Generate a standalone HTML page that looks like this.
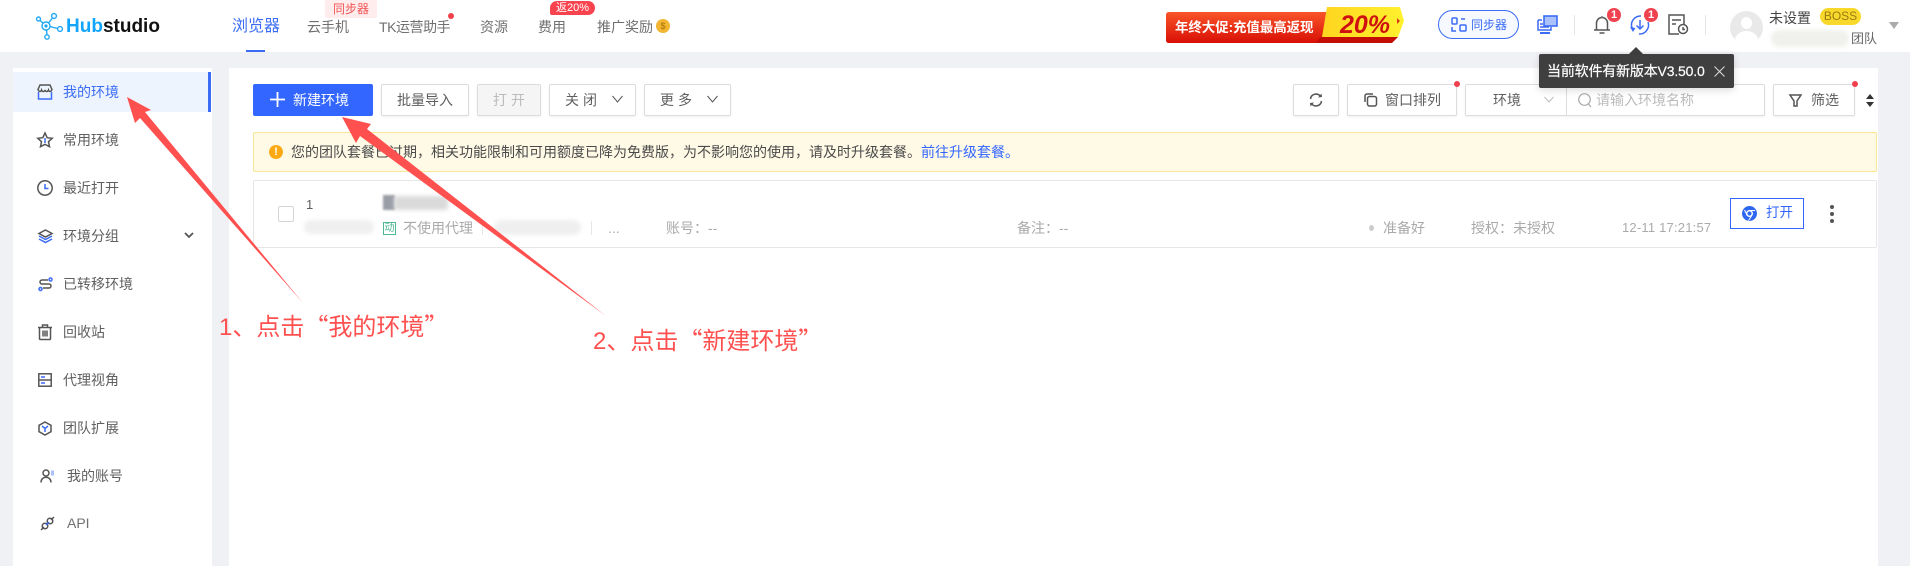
<!DOCTYPE html>
<html lang="zh"><head><meta charset="utf-8"><title>Hubstudio</title>
<style>
html,body{margin:0;padding:0}
body{width:1910px;height:566px;position:relative;overflow:hidden;background:#f0f1f5;font-family:"Liberation Sans","Noto Sans CJK SC",sans-serif;font-size:14px;color:#5f5f5f}
.a{position:absolute}
.t{position:absolute;white-space:nowrap;line-height:20px;height:20px}
.b{position:absolute;box-sizing:border-box;background:#fff;border:1px solid #dcdcdc;border-radius:2px;top:84px;height:32px;box-shadow:0 1px 2px rgba(0,0,0,.06)}
svg{position:absolute;overflow:visible}
.s{fill:none;stroke:#555;stroke-width:1.5}
.bl{fill:none;stroke:#3c6cf5;stroke-width:1.5}
.blur{position:absolute;border-radius:8px;filter:blur(2px)}
.g{color:#aaa}
.q{font-family:"Noto Sans CJK SC",sans-serif}
</style></head><body>
<div class="a" style="left:0;top:0;width:1910px;height:52px;background:#fff"></div>
<div class="a" style="left:13px;top:68px;width:199px;height:498px;background:#fff"></div>
<div class="a" style="left:229px;top:68px;width:1649px;height:498px;background:#fff"></div>

<!-- logo -->
<svg style="left:36px;top:13px" width="30" height="28" viewBox="0 0 30 28"><g fill="none" stroke="#22a8f5" stroke-width="1.4"><circle cx="10" cy="13" r="4"/><circle cx="2.5" cy="6" r="2"/><circle cx="18" cy="3" r="2.4"/><circle cx="24" cy="16" r="2.4"/><circle cx="11" cy="24" r="2.2"/><path d="M4 7.5 7 10M12.5 10 16.5 5M14 13.500 21.500 15.500M10.500 17 11 22"/></g><circle cx="10" cy="13" r="1.6" fill="#22a8f5"/></svg>
<div class="t" style="left:66px;top:16px;font-size:19px;font-weight:700;color:#111;line-height:22px;height:22px"><span style="color:#12a5fb">Hub</span>studio</div>

<!-- nav -->
<div class="t" style="left:232px;top:17px;font-size:16px;color:#3c6cf5">浏览器</div>
<div class="a" style="left:246px;top:50px;width:19px;height:2px;background:#3c6cf5"></div>
<div class="t" style="left:307px;top:17px;color:#707070">云手机</div>
<div class="t" style="left:379px;top:17px;color:#707070;letter-spacing:-.45px">TK运营助手</div>
<div class="t" style="left:480px;top:17px;color:#707070">资源</div>
<div class="t" style="left:538px;top:17px;color:#707070">费用</div>
<div class="t" style="left:597px;top:17px;color:#707070">推广奖励</div>
<div class="a" style="left:656px;top:19px;width:14px;height:14px;border-radius:50%;background:#f2b632;color:#a86f00;font-size:9px;line-height:14px;text-align:center">$</div>
<div class="a" style="left:325px;top:0;width:52px;height:18px;background:#ffecec;border-radius:2px;color:#f25555;font-size:12px;line-height:18px;text-align:center">同步器</div>
<div class="a" style="left:448px;top:13px;width:6px;height:6px;border-radius:50%;background:#f0404c"></div>
<div class="a" style="left:550px;top:1px;width:45px;height:14px;background:#f9444f;border-radius:7px 7px 7px 2px;color:#fff;font-size:11px;line-height:14px;text-align:center">返20%</div>

<!-- banner -->
<svg style="left:1166px;top:7px" width="240" height="37" viewBox="0 0 240 37"><defs><linearGradient id="r" x1="0" y1="0" x2="0" y2="1"><stop offset="0" stop-color="#f9552a"/><stop offset="1" stop-color="#d80f05"/></linearGradient><linearGradient id="y" x1="0" y1="0" x2="1" y2="0"><stop offset="0" stop-color="#ffd420"/><stop offset="1" stop-color="#fff12e"/></linearGradient></defs><path d="M3 5H165V36H3Q0 36 0 33V8Q0 5 3 5Z" fill="url(#r)"/><path d="M154 30 L150 36H226L232 30Z" fill="#c40e05"/><path d="M161 0H234L238 14L232 30H156Z" fill="url(#y)"/><path d="M231 11l3 3-3 3z" fill="#d8371a"/></svg>
<div class="t" style="left:1175px;top:18px;color:#fff;font-weight:700;font-size:13.5px;letter-spacing:-.1px">年终大促:充值最高返现</div>
<div class="t" style="left:1340px;top:11px;color:#cf1010;font-weight:700;font-style:italic;font-size:25px;line-height:28px;height:28px">20%</div>

<!-- sync -->
<div class="a" style="left:1438px;top:10px;width:81px;height:29px;box-sizing:border-box;border:1px solid #3c6cf5;border-radius:15px;background:#f6f9ff"></div>
<svg style="left:1451px;top:17px" width="16" height="16" viewBox="0 0 16 16"><rect x="1" y="1" width="5" height="6" rx="1" class="bl" stroke-width="1.2"/><rect x="9" y="8" width="6" height="6" rx="1" class="bl"/><path d="M1 10v4h4M14 2h-4" class="bl"/></svg>
<div class="t" style="left:1471px;top:15px;font-size:12px;color:#3c6cf5">同步器</div>

<!-- top icons -->
<svg style="left:1537px;top:15px" width="21" height="20" viewBox="0 0 21 20"><path d="M1 5h4M1 5v10h13v-3" class="bl" stroke-width="2"/><rect x="7" y="1" width="13" height="10" fill="#a9c2fb" stroke="#3c6cf5" stroke-width="1.6"/><path d="M3 9h3M3 12h9" class="bl"/><rect x="3" y="17" width="10" height="2" fill="#3c6cf5"/></svg>
<div class="a" style="left:1574px;top:15px;width:1px;height:20px;background:#e4e4e4"></div>
<svg style="left:1593px;top:14px" width="18" height="21" viewBox="0 0 18 21"><path d="M1 16h16M3.500 16V9a5.500 5.500 0 0 1 11 0v7" class="s" stroke="#777"/><path d="M6.500 19h5" class="s" stroke-width="2" stroke="#777"/><circle cx="9" cy="3" r="1" fill="#777"/></svg>
<div class="a" style="left:1607px;top:8px;width:14px;height:14px;border-radius:50%;background:#f04350;color:#fff;font-size:11px;font-weight:700;line-height:14px;text-align:center">1</div>
<svg style="left:1630px;top:14px" width="20" height="22" viewBox="0 0 20 22"><path d="M11 2A9 9 0 0 0 2 14M9 20A9 9 0 0 0 18 8" class="bl" stroke-width="2.2"/><path d="M10 6v9M6.500 11.500l3.500 3.500 3.500-3.500" class="bl" stroke-width="1.800"/><path d="M0 13l3 5 2.500-4z" fill="#3c6cf5"/></svg>
<div class="a" style="left:1644px;top:8px;width:14px;height:14px;border-radius:50%;background:#f04350;color:#fff;font-size:11px;font-weight:700;line-height:14px;text-align:center">1</div>
<svg style="left:1668px;top:14px" width="21" height="21" viewBox="0 0 21 21"><path d="M11 20H1V1H16V10M4 6h9M4 10h4" class="s" stroke="#777"/><circle cx="15" cy="15" r="4.500" class="s" fill="#fff" stroke="#777"/><path d="M15 13v2.500h2" class="s" stroke-width="1"/></svg>
<div class="a" style="left:1705px;top:15px;width:1px;height:20px;background:#e4e4e4"></div>
<div class="a" style="left:1730px;top:11px;width:33px;height:33px;border-radius:50%;background:#e9e9e9;overflow:hidden"><div class="a" style="left:11px;top:6px;width:11px;height:12px;border-radius:50%;background:#fff"></div><div class="a" style="left:5px;top:20px;width:23px;height:18px;border-radius:50%;background:#fff"></div></div>
<div class="t" style="left:1769px;top:8px;color:#444">未设置</div>
<div class="a" style="left:1820px;top:8px;width:41px;height:17px;border-radius:9px;background:#f8d92b;color:#9a7a10;font-size:12px;line-height:17px;text-align:center">BOSS</div>
<div class="blur" style="left:1771px;top:30px;width:78px;height:17px;background:#f0f0ec"></div>
<div class="t" style="left:1851px;top:29px;font-size:13px;color:#666">团队</div>
<div class="a" style="left:1889px;top:22px;border:5px solid transparent;border-top:7px solid #aaa;border-bottom:0"></div>

<!-- sidebar -->
<div class="a" style="left:13px;top:72px;width:195px;height:40px;background:#edf4fe"></div>
<div class="a" style="left:208px;top:72px;width:3px;height:40px;background:#3c6cf5"></div>
<div class="t" style="left:63px;top:82px;color:#3c6cf5">我的环境</div>
<svg style="left:37px;top:84px" width="16" height="16" viewBox="0 0 16 16"><path d="M3 1h10l2 4.500c-1 2.500-3 2.500-3.500.5-.8 2-3 2-3.500 0-.5 2-2.700 2-3.500 0-.5 2-2.500 2-3.500-.5z" class="s" stroke="#666" stroke-width="1.300"/><path d="M1.500 8v7h13V8M1.500 15h13" class="bl" stroke-width="1.800"/></svg>
<div class="t" style="left:63px;top:130px">常用环境</div>
<svg style="left:37px;top:132px" width="16" height="16" viewBox="0 0 16 16"><path d="M8 1l2.200 4.700 5 .6-3.700 3.400 1 5L8 12.300 3.500 14.700l1-5L.8 6.300l5-.6z" class="s"/><path d="M8 6v5" class="bl"/></svg>
<div class="t" style="left:63px;top:178px">最近打开</div>
<svg style="left:37px;top:180px" width="16" height="16" viewBox="0 0 16 16"><circle cx="8" cy="8" r="7.200" class="s"/><path d="M8 4v4.500h3.500" class="bl" stroke-width="1.800"/></svg>
<div class="t" style="left:63px;top:226px">环境分组</div>
<svg style="left:38px;top:229px" width="15" height="15" viewBox="0 0 15 15"><path d="M7.500 1 14 4.500 7.500 8 1 4.500z" class="s" stroke="#666" stroke-width="1.200"/><path d="M1 7l6.500 3.500L14 7M1 10l6.500 3.500L14 10" class="bl" stroke="#7fa2f5" stroke-width="1.300"/></svg>
<svg style="left:184px;top:232px" width="10" height="7" viewBox="0 0 10 7"><path d="M1 1l4 4 4-4" fill="none" stroke="#555" stroke-width="1.800"/></svg>
<div class="t" style="left:63px;top:274px">已转移环境</div>
<svg style="left:38px;top:277px" width="15" height="15" viewBox="0 0 15 15"><path d="M10 3H4a2 2 0 0 0 0 4h7a2 2 0 0 1 0 4H5" class="s" stroke-width="1.300" stroke="#777"/><circle cx="12.500" cy="2.500" r="1.500" class="bl" stroke-width="1.100"/><circle cx="2.500" cy="12" r="1.500" class="bl" stroke-width="1.100"/></svg>
<div class="t" style="left:63px;top:322px">回收站</div>
<svg style="left:37px;top:324px" width="16" height="16" viewBox="0 0 16 16"><path d="M1 3.500h14M5.500 3V1h5v2M2.500 4v10.500a1 1 0 0 0 1 1h9a1 1 0 0 0 1-1V4M6 6.500v6M8 6.500v6M10 6.500v6" class="s" stroke-width="1.300"/></svg>
<div class="t" style="left:63px;top:370px">代理视角</div>
<svg style="left:38px;top:373px" width="14" height="14" viewBox="0 0 14 14"><rect x=".8" y=".8" width="12.400" height="12.400" class="s" stroke="#777"/><path d="M1 7h12" class="s" stroke="#777"/><path d="M3 4h4M3 10h4" class="bl" stroke="#7fa2f5" stroke-width="1.500"/></svg>
<div class="t" style="left:63px;top:418px">团队扩展</div>
<svg style="left:38px;top:421px" width="14" height="15" viewBox="0 0 14 15"><path d="M7 1l6 3.300v6.400L7 14 1 10.700V4.300z" class="s" stroke-width="1.200"/><path d="M4 5l3 2.500L10 5M7 7.500V11" class="bl" stroke="#6b93f5"/></svg>
<div class="t" style="left:67px;top:466px">我的账号</div>
<svg style="left:40px;top:469px" width="15" height="14" viewBox="0 0 15 14"><circle cx="6" cy="4" r="3" class="s" stroke-width="1.300"/><path d="M1 13.500c0-7 10-7 10 0" class="s" stroke-width="1.300"/><rect x="11" y="1.500" width="3" height="5" fill="#a9c2fb"/></svg>
<div class="t" style="left:67px;top:513px;color:#707070">API</div>
<svg style="left:40px;top:516px" width="15" height="15" viewBox="0 0 15 15"><path d="M1 14l3-3M11 4l3-3" class="s" stroke-width="1.200"/><ellipse cx="5" cy="10" rx="2.800" ry="2.800" class="s" stroke-width="1.200"/><ellipse cx="10" cy="5" rx="2.800" ry="2.800" class="s" stroke-width="1.200"/><path d="M6 9l3-3" class="bl"/></svg>

<!-- toolbar -->
<div class="a" style="left:253px;top:84px;width:120px;height:32px;background:#3366ff;border-radius:2px"></div>
<svg style="left:270px;top:92px" width="15" height="15" viewBox="0 0 15 15"><path d="M7.500 0v15M0 7.500h15" stroke="#fff" stroke-width="1.800"/></svg>
<div class="t" style="left:293px;top:90px;color:#fff">新建环境</div>
<div class="b" style="left:381px;width:88px"></div><div class="t" style="left:397px;top:90px">批量导入</div>
<div class="b" style="left:477px;width:64px;background:#f5f5f5"></div><div class="t" style="left:493px;top:90px;color:#bbb;letter-spacing:4px">打开</div>
<div class="b" style="left:549px;width:87px"></div><div class="t" style="left:565px;top:90px;letter-spacing:4px">关闭</div>
<svg style="left:612px;top:95px" width="11" height="8" viewBox="0 0 11 8"><path d="M.5 1l5 6 5-6" fill="none" stroke="#555"/></svg>
<div class="b" style="left:644px;width:87px"></div><div class="t" style="left:660px;top:90px;letter-spacing:4px">更多</div>
<svg style="left:707px;top:95px" width="11" height="8" viewBox="0 0 11 8"><path d="M.5 1l5 6 5-6" fill="none" stroke="#555"/></svg>

<div class="b" style="left:1293px;width:46px"></div>
<svg style="left:1309px;top:93px" width="14" height="14" viewBox="0 0 14 14"><path d="M1.500 6A5.500 5.500 0 0 1 11.500 3.500M12.500 8A5.500 5.500 0 0 1 2.500 10.500" class="s" stroke-width="1.800"/><path d="M9 4.500l4-.5-.5-3.500zM5 9.500l-4 .5.500 3.500z" fill="#555"/></svg>
<div class="b" style="left:1347px;width:110px"></div>
<svg style="left:1364px;top:93px" width="13" height="14" viewBox="0 0 13 14"><rect x="3.500" y="3.500" width="9" height="9.500" rx="2" class="s" stroke="#888" stroke-width="1.100"/><path d="M1 9V3a2 2 0 0 1 2-2h6" class="s" stroke="#888" stroke-width="1.100"/></svg>
<div class="t" style="left:1385px;top:90px">窗口排列</div>
<div class="a" style="left:1454px;top:81px;width:6px;height:6px;border-radius:50%;background:#f0404c"></div>
<div class="b" style="left:1465px;width:300px"></div>
<div class="a" style="left:1566px;top:85px;width:1px;height:30px;background:#dcdcdc"></div>
<div class="t" style="left:1493px;top:90px">环境</div>
<svg style="left:1544px;top:96px" width="10" height="7" viewBox="0 0 10 7"><path d="M.5 1l4.500 5 4.500-5" fill="none" stroke="#bbb"/></svg>
<svg style="left:1578px;top:93px" width="14" height="15" viewBox="0 0 14 15"><circle cx="6.500" cy="6.500" r="5.800" fill="none" stroke="#aaa" stroke-width="1.200"/><path d="M10.500 11l2.500 3" stroke="#aaa" stroke-width="1.200"/></svg>
<div class="t" style="left:1596px;top:90px;color:#bbb">请输入环境名称</div>
<div class="b" style="left:1773px;width:82px"></div>
<svg style="left:1789px;top:94px" width="13" height="13" viewBox="0 0 13 13"><path d="M1 1h11L8 7v5H5V7z" class="s" stroke-width="1.200"/></svg>
<div class="t" style="left:1811px;top:90px">筛选</div>
<div class="a" style="left:1852px;top:81px;width:6px;height:6px;border-radius:50%;background:#f0404c"></div>
<svg style="left:1865px;top:94px" width="10" height="13" viewBox="0 0 10 13"><path d="M5 0l4 5H1zM5 13l4-5H1z" fill="#333"/></svg>

<!-- alert -->
<div class="a" style="left:253px;top:132px;width:1624px;height:40px;box-sizing:border-box;background:#fffae6;border:1px solid #fbe597;border-radius:2px"></div>
<div class="a" style="left:269px;top:145px;width:14px;height:14px;border-radius:50%;background:#fbaa16;color:#fff;font-size:11px;font-weight:700;line-height:14px;text-align:center">!</div>
<div class="t" style="left:291px;top:142px;color:#4a4a4a">您的团队套餐已过期，相关功能限制和可用额度已降为免费版，为不影响您的使用，请及时升级套餐。<span style="color:#3366ff">前往升级套餐。</span></div>

<!-- row -->
<div class="a" style="left:253px;top:180px;width:1624px;height:68px;box-sizing:border-box;background:#fff;border:1px solid #e6e6e6;border-radius:2px"></div>
<div class="a" style="left:278px;top:206px;width:16px;height:16px;box-sizing:border-box;border:1px solid #d5d5d5;border-radius:2px"></div>
<div class="t" style="left:306px;top:195px;font-size:13px">1</div>
<div class="a" style="left:383px;top:195px;width:12px;height:15px;background:#9a9da6;filter:blur(1px)"></div>
<div class="blur" style="left:394px;top:196px;width:54px;height:14px;background:#dadada;border-radius:3px"></div>
<div class="blur" style="left:304px;top:220px;width:70px;height:14px;background:#efefef"></div>
<div class="a" style="left:383px;top:222px;width:13px;height:13px;box-sizing:border-box;border:1px solid #4fb892;color:#4fb892;font-size:10px;line-height:11px;text-align:center">动</div>
<div class="t g" style="left:403px;top:218px">不使用代理</div>
<div class="a" style="left:482px;top:221px;width:1px;height:14px;background:#e6e6e6"></div>
<div class="blur" style="left:494px;top:220px;width:87px;height:15px;background:#efefef"></div>
<div class="a" style="left:591px;top:221px;width:1px;height:14px;background:#e6e6e6"></div>
<div class="t g" style="left:608px;top:218px">...</div>
<div class="t g" style="left:666px;top:218px">账号：--</div>
<div class="t g" style="left:1017px;top:218px">备注：--</div>
<div class="a" style="left:1369px;top:225px;width:5px;height:6px;border-radius:50%;background:#ccc"></div>
<div class="t g" style="left:1383px;top:218px">准备好</div>
<div class="t g" style="left:1471px;top:218px">授权：未授权</div>
<div class="t g" style="left:1622px;top:218px;font-size:13px;letter-spacing:.2px">12-11 17:21:57</div>
<div class="a" style="left:1730px;top:198px;width:74px;height:31px;box-sizing:border-box;border:1px solid #3366ff"></div>
<svg style="left:1742px;top:206px" width="15" height="15" viewBox="0 0 15 15"><circle cx="7.500" cy="7.500" r="7.500" fill="#2f66f0"/><circle cx="7.500" cy="7.500" r="2.800" fill="none" stroke="#fff" stroke-width="1.400"/><path d="M7.500 4.500H13M5 9l-2.500-5M9.500 10l-3 4.500" stroke="#fff"/></svg>
<div class="t" style="left:1766px;top:203px;color:#3366ff;font-size:13.500px">打开</div>
<div class="a" style="left:1830px;top:205px;width:4px;height:4px;border-radius:50%;background:#555"></div>
<div class="a" style="left:1830px;top:212px;width:4px;height:4px;border-radius:50%;background:#555"></div>
<div class="a" style="left:1830px;top:219px;width:4px;height:4px;border-radius:50%;background:#555"></div>

<!-- tooltip -->
<div class="a" style="left:1628px;top:47px;width:0;height:0;border-left:8px solid transparent;border-right:8px solid transparent;border-bottom:8px solid #3f3f3f"></div>
<div class="a" style="left:1539px;top:54px;width:195px;height:34px;background:#3f3f3f;border-radius:2px;box-shadow:0 2px 8px rgba(0,0,0,.15)"></div>
<div class="t" style="left:1547px;top:61px;color:#fff;font-size:14px;letter-spacing:-.18px;-webkit-text-stroke:.2px #fff">当前软件有新版本V3.50.0</div>
<svg style="left:1714px;top:66px" width="11" height="11" viewBox="0 0 11 11"><path d="M.5.500l10 10M10.500.500l-10 10" stroke="#ddd"/></svg>

<!-- annotations -->
<svg style="left:0;top:0" width="1910" height="566" viewBox="0 0 1910 566"><polygon points="127,97 151,110 145,112 303,303 140,118 135,123" fill="#ff5050"/><polygon points="342,117 371,124 367,129 606,316 360,136 356,143" fill="#ff5050"/></svg>
<div class="t" style="left:219px;top:309px;height:32px;line-height:32px;font-size:24px;color:#ff5050">1、点击<span class="q">“</span>我的环境<span class="q">”</span></div>
<div class="t" style="left:593px;top:323px;height:32px;line-height:32px;font-size:24px;color:#ff5050">2、点击<span class="q">“</span>新建环境<span class="q">”</span></div>
</body></html>
